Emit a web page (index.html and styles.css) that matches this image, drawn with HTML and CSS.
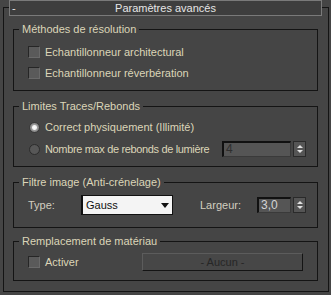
FILE: index.html
```html
<!DOCTYPE html>
<html lang="fr">
<head>
    <meta charset="UTF-8">
    <title>Paramètres avancés</title>
    <link rel="stylesheet" href="styles.css">
</head>
<body>
    <div class="rollout">
        <div class="rollout-head">
            <span class="toggle">-</span>
            <span class="rollout-title">Paramètres avancés</span>
        </div>

        <fieldset class="group g-methods">
            <legend>Méthodes de résolution</legend>
            <div class="row">
                <span class="check"></span>
                <span class="label">Echantillonneur architectural</span>
            </div>
            <div class="row">
                <span class="check"></span>
                <span class="label">Echantillonneur réverbération</span>
            </div>
        </fieldset>

        <fieldset class="group g-limits">
            <legend>Limites Traces/Rebonds</legend>
            <div class="row">
                <span class="radio on"></span>
                <span class="label">Correct physiquement (Illimité)</span>
            </div>
            <div class="row row-spin">
                <span class="radio"></span>
                <span class="label">Nombre max de rebonds de lumière</span>
                <div class="spinner">
                    <span class="spin-field disabled wide">4</span>
                    <span class="spin-btns"><i class="up"></i><i class="down"></i></span>
                </div>
            </div>
        </fieldset>

        <fieldset class="group g-filter">
            <legend>Filtre image (Anti-crénelage)</legend>
            <div class="row row-filter">
                <span class="label type-label">Type:</span>
                <div class="dropdown">
                    <span>Gauss</span>
                    <span class="arrow"></span>
                </div>
                <span class="label width-label">Largeur:</span>
                <div class="spinner">
                    <span class="spin-field narrow">3,0</span>
                    <span class="spin-btns"><i class="up"></i><i class="down"></i></span>
                </div>
            </div>
        </fieldset>

        <fieldset class="group g-override">
            <legend>Remplacement de matériau</legend>
            <div class="row row-override">
                <span class="check"></span>
                <span class="label">Activer</span>
                <span class="map-btn">- Aucun -</span>
            </div>
        </fieldset>
    </div>
</body>
</html>
```
FILE: styles.css
```css
*{
    box-sizing: border-box;
}
html, body{
    margin: 0;
    padding: 0;
    background: #454545;
}
body{
    font-family: "Liberation Sans", Arial, sans-serif;
    font-size: 11px;
    color: #dcd5b8;
}

.rollout{
    margin: 7px 2px 0 3px;
    height: 285px;
    border: 1px solid #141414;
    padding: 0 0 10px 0;
}
.rollout-head{
    margin: -8px 6px 0 5px;
    height: 16px;
    border: 1px solid #7a7a7a;
    background: #3e3e3e;
    color: #e6e6e6;
    display: flex;
    align-items: center;
    line-height: 14px;
}
.toggle{
    padding-left: 2px;
    width: 12px;
}
.rollout-title{
    flex: 1;
    text-align: center;
    margin-right: 12px;
}

.group{
    margin: 9px 10px 0 9px;
    padding: 0 11px 0 0;
    border: 1px solid #141414;
    min-width: 0;
}
.group legend{
    margin-left: 5px;
    padding: 0 3px;
    line-height: 13px;
}
.g-methods{
    margin-top: 7px;
    padding-top: 9px;
    padding-bottom: 10px;
}
.g-limits{
    padding-top: 7px;
    padding-bottom: 9px;
}
.g-filter{
    padding-top: 6px;
    padding-bottom: 12px;
}
.g-override{
    margin-top: 7px;
    padding-top: 5px;
    padding-bottom: 9px;
}

.row{
    display: flex;
    align-items: center;
    height: 14px;
    line-height: 14px;
    padding-left: 14px;
}
.row + .row{
    margin-top: 7px;
}
.row-spin{
    height: 16px;
    letter-spacing: -0.35px;
}
.row-filter{
    height: 20px;
}
.row-override{
    height: 18px;
}

.check{
    width: 12px;
    height: 12px;
    margin-right: 5px;
    background: #5a5a5a;
    border: 1px solid;
    border-color: #262626 #6a6a6a #6a6a6a #262626;
    flex: none;
}
.radio{
    width: 11px;
    height: 11px;
    margin: 0 5px 0 1px;
    border-radius: 50%;
    background: #575757;
    border: 1px solid #2c2c2c;
    flex: none;
}
.radio.on{
    background: radial-gradient(circle, #ffffff 0, #f2f2f2 2px, #9a9a9a 3px, #7c7c7c 5px);
    border-color: #3a3a3a;
}

.spinner{
    display: flex;
    align-items: stretch;
    height: 16px;
    margin-left: auto;
    letter-spacing: 0;
}
.row-filter .spinner{
    margin-left: 0;
}
.spin-field{
    background: #555555;
    border-style: solid;
    border-width: 2px 1px 1px 2px;
    border-color: #111111 #3a3a3a #3a3a3a #111111;
    color: #d4d4d4;
    line-height: 12px;
    padding-left: 2px;
    font-size: 12px;
}
.spin-field.disabled{
    color: #2e2e2e;
}
.spin-field.wide{
    width: 69px;
}
.spin-field.narrow{
    width: 34px;
}
.spin-btns{
    width: 13px;
    margin-left: 2px;
    background: #555555;
    border: 1px solid #2a2a2a;
    display: flex;
    flex-direction: column;
    align-items: center;
    justify-content: space-evenly;
}
.spin-btns i{
    width: 0;
    height: 0;
    border-left: 3px solid transparent;
    border-right: 3px solid transparent;
}
.spin-btns .up{
    border-bottom: 3px solid #e0e0e0;
}
.spin-btns .down{
    border-top: 3px solid #e0e0e0;
}

.type-label{
    width: 53px;
    flex: none;
    color: #d2cec0;
}
.dropdown{
    width: 95px;
    height: 20px;
    background: #f4f4f4;
    border-style: solid;
    border-width: 1px 1px 1px 2px;
    border-color: #111111;
    color: #101010;
    display: flex;
    align-items: center;
    justify-content: space-between;
    padding: 0 3px 0 3px;
    font-size: 11px;
}
.arrow{
    width: 0;
    height: 0;
    border-left: 4px solid transparent;
    border-right: 4px solid transparent;
    border-top: 5px solid #111111;
}
.width-label{
    margin-left: 27px;
    width: 57px;
    flex: none;
    color: #d2cec0;
}

.map-btn{
    margin-left: auto;
    margin-right: 3px;
    width: 161px;
    height: 18px;
    border: 1px solid;
    border-color: #5c5c5c #141414 #141414 #5c5c5c;
    background: #474747;
    color: #262626;
    text-align: center;
    line-height: 16px;
}
```
